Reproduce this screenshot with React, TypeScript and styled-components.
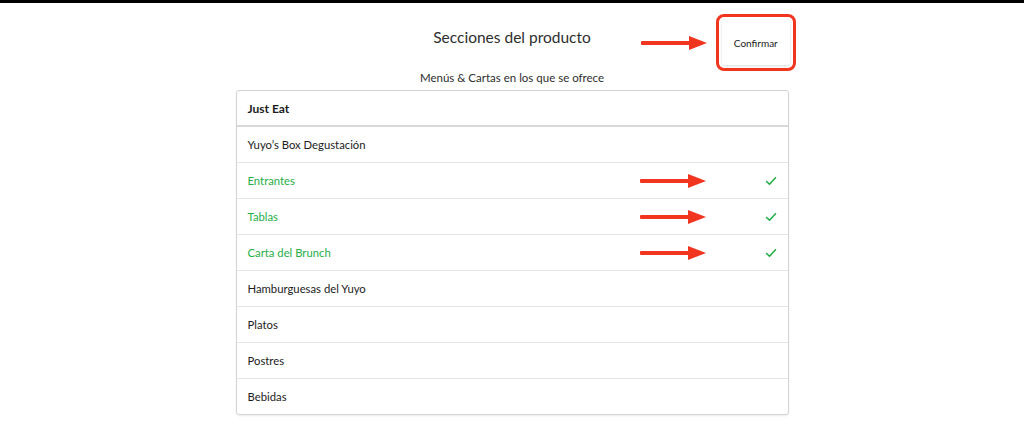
import styled, { createGlobalStyle } from "styled-components";

const GlobalStyle = createGlobalStyle`
   html, body {
      margin: 0;
      padding: 0;
      background: #ffffff;
      font-family: Lato, "Open Sans", Arial, sans-serif;
      color: #1c1c1c;
   }
`;

const sections = [
   { label: "Just Eat", header: true },
   { label: "Yuyo’s Box Degustación" },
   { label: "Entrantes", selected: true },
   { label: "Tablas", selected: true },
   { label: "Carta del Brunch", selected: true },
   { label: "Hamburguesas del Yuyo" },
   { label: "Platos" },
   { label: "Postres" },
   { label: "Bebidas" },
];

function Arrow() {
   return (
      <svg width="66" height="14" viewBox="0 0 66 14">
         <rect x="0" y="5" width="50" height="4" rx="1" fill="#f2351f" />
         <polygon points="48,0 66,7 48,14" fill="#f2351f" />
      </svg>
   );
}

function Check() {
   return (
      <svg width="12" height="10" viewBox="0 0 12 10">
         <polyline
            points="1.5,5.5 4.5,8.2 10.5,1.8"
            fill="none"
            stroke="#27ae48"
            strokeWidth="1.6"
            strokeLinecap="round"
            strokeLinejoin="round"
         />
      </svg>
   );
}

export default function App() {
   return (
      <>
         <GlobalStyle />
         <PageStyled>
            <TopBar />
            <Header>
               <Title>Secciones del producto</Title>
               <Actions>
                  <Arrow />
                  <Highlight>
                     <ConfirmButton>Confirmar</ConfirmButton>
                  </Highlight>
               </Actions>
            </Header>
            <Subtitle>Menús &amp; Cartas en los que se ofrece</Subtitle>
            <List>
               {sections.map(({ label, header, selected }) => (
                  <Row key={label} $header={header}>
                     <RowLabel $selected={selected} $header={header}>
                        {label}
                     </RowLabel>
                     {selected && (
                        <RowMarks>
                           <Arrow />
                           <Check />
                        </RowMarks>
                     )}
                  </Row>
               ))}
            </List>
         </PageStyled>
      </>
   );
}

const PageStyled = styled.div`
   width: 1024px;
   height: 439px;
   overflow: hidden;
   display: flex;
   flex-direction: column;
`;

const TopBar = styled.div`
   height: 3px;
   background: #000000;
`;

const Header = styled.div`
   display: grid;
   grid-template-columns: 1fr auto 1fr;
   align-items: center;
   margin-top: 11px;
   height: 57px;
`;

const Title = styled.h1`
   grid-column: 2;
   margin: 0;
   font-size: 15.5px;
   font-weight: 400;
   color: #2e2e2e;
   position: relative;
   top: -6px;
`;

const Actions = styled.div`
   grid-column: 3;
   display: flex;
   align-items: center;
   gap: 9px;
   padding-left: 50px;
`;

const Highlight = styled.div`
   box-sizing: border-box;
   width: 80px;
   height: 57px;
   border: 3px solid #f2351f;
   border-radius: 8px;
   padding: 3px;
   display: flex;
`;

const ConfirmButton = styled.button`
   flex: 1;
   border: none;
   background: #ffffff;
   border-radius: 3px;
   box-shadow: 0 1px 3px rgba(0, 0, 0, 0.15);
   font-family: inherit;
   font-size: 10px;
   color: #1c1c1c;
   cursor: pointer;
   padding: 0;
`;

const Subtitle = styled.p`
   margin: 0;
   text-align: center;
   font-size: 11.5px;
   line-height: 14px;
   color: #2e2e2e;
`;

const List = styled.div`
   width: 551px;
   margin: 5px auto 0;
   border: 1px solid #d4d4d4;
   border-radius: 3px;
   box-shadow: 0 1px 2px rgba(0, 0, 0, 0.08);
`;

const Row = styled.div<{ $header?: boolean }>`
   display: flex;
   align-items: center;
   height: ${({ $header }) => ($header ? "34px" : "35px")};
   padding: 0 11px 0 11px;
   border-bottom: ${({ $header }) =>
      $header ? "2px solid #d8d8d8" : "1px solid #e4e4e4"};

   &:last-child {
      border-bottom: none;
   }
`;

const RowLabel = styled.span<{ $selected?: boolean; $header?: boolean }>`
   font-size: ${({ $header }) => ($header ? "12px" : "11.3px")};
   font-weight: ${({ $header }) => ($header ? 700 : 400)};
   color: ${({ $selected }) => ($selected ? "#27ae48" : "#1c1c1c")};
`;

const RowMarks = styled.div`
   margin-left: auto;
   display: flex;
   align-items: center;
   gap: 59px;
`;
